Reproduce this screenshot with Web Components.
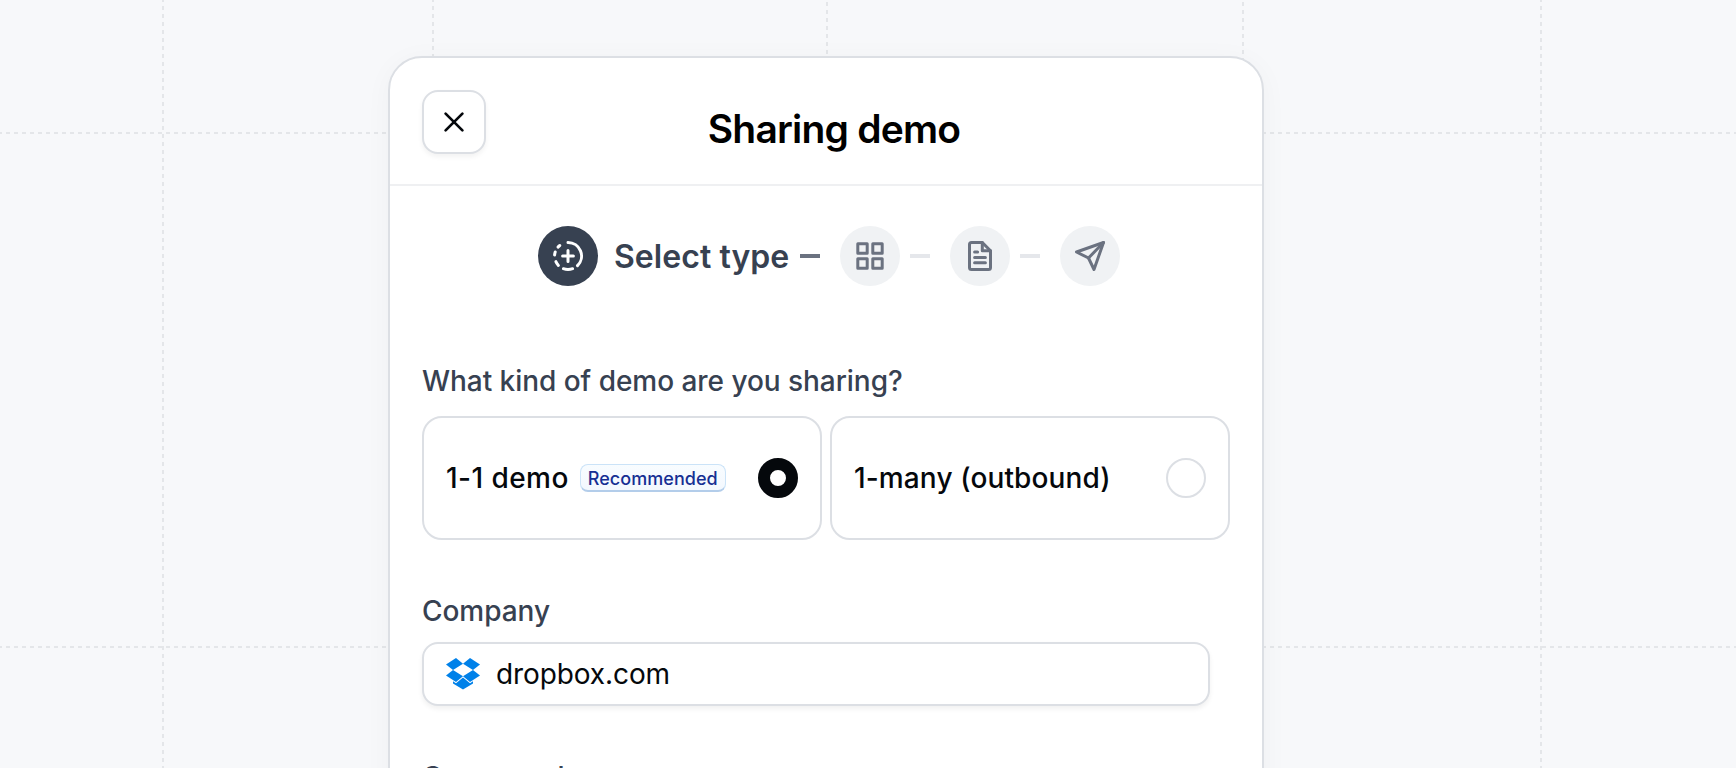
<!DOCTYPE html>
<html lang="en">
<head>
<meta charset="UTF-8">
<title>Sharing demo</title>
<style>
  html, body {
    margin: 0;
    height: 100%;
    overflow: hidden;
  }
  body {
    font-family: Inter, "Liberation Sans", sans-serif;
    color: #05080c;
  }
  option-card:first-child { --tracking: 0.45px; }
  option-card:last-child { --tracking: 0.13px; }
</style>
</head>
<body>
<grid-backdrop>
  <demo-dialog heading="Sharing demo">
    <step-list>
      <step-item icon="type" label="Select type" active></step-item>
      <step-item icon="grid"></step-item>
      <step-item icon="doc"></step-item>
      <step-item icon="send"></step-item>
    </step-list>
    <form-field label="What kind of demo are you sharing?" class="kind">
      <option-card label="1-1 demo" checked><info-badge>Recommended</info-badge></option-card>
      <option-card label="1-many (outbound)"></option-card>
    </form-field>
    <form-field label="Company" class="company">
      <company-input value="dropbox.com"></company-input>
    </form-field>
    <form-field label="Company logo" class="logo"></form-field>
  </demo-dialog>
</grid-backdrop>

<script>
// Shared helper: attach an open root and fill it
class BaseElement extends HTMLElement {
  connectedCallback() {
    if (!this.shadowRoot) this.attachShadow({ mode: 'open' });
    this.shadowRoot.innerHTML = this.render();
  }
}

// Page background with dashed guide lines
class GridBackdrop extends BaseElement {
  render() {
    // 4px dash, 4px gap
    const late = 'repeating-linear-gradient(180deg, transparent 0 2px, #e4e6e9 2px 6px, transparent 6px 8px)';
    const down = 'repeating-linear-gradient(180deg, #e4e6e9 0 2px, transparent 2px 6px, #e4e6e9 6px 8px)';
    const across = 'repeating-linear-gradient(90deg, #e4e6e9 0 2px, transparent 2px 6px, #e4e6e9 6px 8px)';
    return `
      <style>
        :host {
          display: flex;
          justify-content: flex-start;
          box-sizing: border-box;
          height: 768px;
          padding: 56px 0 0 388px;
          overflow: hidden;
          background-color: #f7f8fa;
          background-image: ${down}, ${down}, ${late}, ${late}, ${down}, ${across}, ${across};
          background-repeat: no-repeat;
          background-size: 2px 100%, 2px 100%, 2px 100%, 2px 100%, 2px 100%, 100% 2px, 100% 2px;
          background-position: 162px 0, 432px 0, 826px 0, 1242px 0, 1540px 0, 0 132px, 0 646px;
        }
      </style>
      <slot></slot>
    `;
  }
}

// Dialog with a close button, a title and a body
class DemoDialog extends BaseElement {
  render() {
    return `
      <style>
        :host {
          display: block;
          box-sizing: border-box;
          width: 876px;
          height: 900px;
          border: 2px solid #dcdfe4;
          border-radius: 34px;
          background: #fff;
          box-shadow: 0 4px 28px rgba(0, 0, 0, 0.035);
        }
        header {
          display: grid;
          grid-template-columns: 64px 1fr;
          box-sizing: border-box;
          height: 128px;
          padding: 32px 80px 0 32px;
          border-bottom: 2px solid #eff0f2;
        }
        button {
          display: grid;
          place-items: center;
          width: 64px;
          height: 64px;
          padding: 0;
          border: 2px solid #dcdfe4;
          border-radius: 16px;
          background: #fff;
          box-shadow: 0 3px 5px rgba(0, 0, 0, 0.05);
        }
        h1 {
          margin: 15px 0 0;
          font-size: 39px;
          line-height: 48px;
          font-weight: 600;
          letter-spacing: -0.8px;
          text-align: center;
          color: #000;
        }
      </style>
      <header>
        <button aria-label="Close">
          <svg width="24" height="24" viewBox="0 0 24 24" fill="none" stroke="#05080c" stroke-width="2.7" stroke-linecap="round"><path d="M3.6 3.6l16.8 16.8M20.4 3.6l-16.8 16.8"/></svg>
        </button>
        <h1>${this.getAttribute('heading')}</h1>
      </header>
      <slot></slot>
    `;
  }
}

class StepList extends BaseElement {
  render() {
    return `
      <style>
        :host {
          display: flex;
          align-items: center;
          height: 60px;
          padding: 40px 0 0 148px;
        }
      </style>
      <slot></slot>
    `;
  }
}

// Icons are drawn on a 36px box
const ICONS = {
  type: `
    <path d="M18 4.5a13.5 13.5 0 0 1 9.5 23.1"/>
    <path d="M22.6 30.7a13.5 13.5 0 0 1-9.2 0"/>
    <path d="M8.4 27.4a13.5 13.5 0 0 1-2.5-3.8"/>
    <path d="M4.6 17a13.5 13.5 0 0 1 .6-3"/>
    <path d="M8 9.1a13.5 13.5 0 0 1 1.8-1.6"/>
    <path d="M18 12.6v10.8M12.6 18h10.8"/>`,
  grid: `
    <rect x="5.8" y="5.8" width="9.4" height="9.4"/>
    <rect x="20.8" y="5.8" width="9.4" height="9.4"/>
    <rect x="5.8" y="20.8" width="9.4" height="9.4"/>
    <rect x="20.8" y="20.8" width="9.4" height="9.4"/>`,
  doc: `
    <path d="M20.3 4.5H9.5a2 2 0 0 0-2 2v23a2 2 0 0 0 2 2h17a2 2 0 0 0 2-2V12.7z"/>
    <path d="M20.3 4.5v8.2h8.2"/>
    <path d="M12.6 14h3M12.6 19.4h10.8M12.6 24.7h10.8"/>`,
  send: `
    <path d="M31.5 4.5L4.5 14l12 6L22 31.5z"/>
    <path d="M31.5 4.5L16.5 20"/>`
};

// One step: round icon, optional label, dash towards the next step
class StepItem extends BaseElement {
  render() {
    const label = this.getAttribute('label');
    return `
      <style>
        :host {
          display: flex;
          align-items: center;
          color: #6b7280;
        }
        .icon {
          display: grid;
          place-items: center;
          width: 60px;
          height: 60px;
          border-radius: 50%;
          background: #f0f2f4;
        }
        :host([active]) .icon {
          background: #374151;
          color: #fff;
        }
        .label {
          width: 174px;
          margin: 2px 12px 0 16px;
          font-size: 32px;
          line-height: 40px;
          font-weight: 600;
          letter-spacing: 0.05px;
          white-space: nowrap;
          color: #374151;
        }
        .dash {
          width: 20px;
          height: 4px;
          margin: 0 20px 0 10px;
          background: #e5e7eb;
        }
        :host([active]) .dash {
          margin-left: 0;
          background: #6b7280;
        }
        :host(:last-child) .dash { display: none; }
      </style>
      <div class="icon">
        <svg width="36" height="36" viewBox="0 0 36 36" fill="none" stroke="currentColor" stroke-width="3" stroke-linecap="round" stroke-linejoin="round">${ICONS[this.getAttribute('icon')]}</svg>
      </div>
      ${label ? `<span class="label">${label}</span>` : ''}
      <div class="dash"></div>
    `;
  }
}

class FormField extends BaseElement {
  render() {
    return `
      <style>
        :host {
          display: block;
          padding: 0 32px;
        }
        :host(.kind) { padding-top: 78px; }
        :host(.company) { padding-top: 54px; }
        :host(.logo) { padding-top: 54px; }
        label {
          display: block;
          font-size: 28px;
          line-height: 34px;
          font-weight: 500;
          letter-spacing: -0.04px;
          color: #374151;
        }
        .controls {
          display: flex;
          gap: 8px;
          margin-top: 18px;
        }
        :host(.company) .controls { margin-top: 14px; }
      </style>
      <label>${this.getAttribute('label')}</label>
      <div class="controls"><slot></slot></div>
    `;
  }
}

// Selectable card with a radio mark
class OptionCard extends BaseElement {
  render() {
    return `
      <style>
        :host {
          display: flex;
          align-items: center;
          box-sizing: border-box;
          width: 400px;
          height: 124px;
          padding: 0 22px;
          border: 2px solid #dcdfe4;
          border-radius: 20px;
          background: #fff;
        }
        .text {
          margin-right: 11px;
          font-size: 28px;
          line-height: 34px;
          font-weight: 500;
          letter-spacing: var(--tracking, 0);
          white-space: nowrap;
        }
        .radio {
          box-sizing: border-box;
          width: 40px;
          height: 40px;
          margin-left: auto;
          border: 2px solid #dcdfe4;
          border-radius: 50%;
        }
        :host([checked]) .radio {
          border: 12px solid #05080c;
        }
      </style>
      <span class="text">${this.getAttribute('label')}</span>
      <slot></slot>
      <span class="radio"></span>
    `;
  }
}

class InfoBadge extends BaseElement {
  render() {
    return `
      <style>
        :host {
          display: flex;
          align-items: center;
          justify-content: center;
          box-sizing: border-box;
          width: 146px;
          height: 28px;
          padding-top: 2px;
          border: 1px solid #cbe3f8;
          border-bottom: 2px solid #b3cdea;
          border-radius: 8px;
          background: linear-gradient(#f8fcff, #f3f8fe);
          font-size: 18px;
          line-height: 23px;
          font-weight: 500;
          letter-spacing: 0.05px;
          color: #162f93;
        }
      </style>
      <slot></slot>
    `;
  }
}

// Company domain with its logo in front
class CompanyInput extends BaseElement {
  render() {
    return `
      <style>
        :host {
          display: flex;
          align-items: center;
          gap: 16px;
          box-sizing: border-box;
          width: 788px;
          height: 64px;
          padding: 0 22px;
          border: 2px solid #dcdfe4;
          border-radius: 16px;
          background: #fff;
          box-shadow: 0 3px 5px rgba(0, 0, 0, 0.06);
          font-size: 28px;
          line-height: 34px;
          letter-spacing: -0.1px;
        }
      </style>
      <svg width="34" height="32" viewBox="0 0 34 32" fill="#0081e9">
        <path d="M10 0L0 6.4l7 5.5L17 5.7z"/>
        <path d="M24 0l10 6.4-7 5.5L17 5.7z"/>
        <path d="M7 11.9l-7 5.6L10 24l7-5.8z"/>
        <path d="M27 11.9l7 5.6L24 24l-7-5.8z"/>
        <path d="M17 19.5l-7 5.8-3-2v2.2L17 31.6l10-6.1v-2.2l-3 2z"/>
      </svg>
      <span>${this.getAttribute('value')}</span>
    `;
  }
}

customElements.define('grid-backdrop', GridBackdrop);
customElements.define('demo-dialog', DemoDialog);
customElements.define('step-list', StepList);
customElements.define('step-item', StepItem);
customElements.define('form-field', FormField);
customElements.define('option-card', OptionCard);
customElements.define('info-badge', InfoBadge);
customElements.define('company-input', CompanyInput);
</script>
</body>
</html>
